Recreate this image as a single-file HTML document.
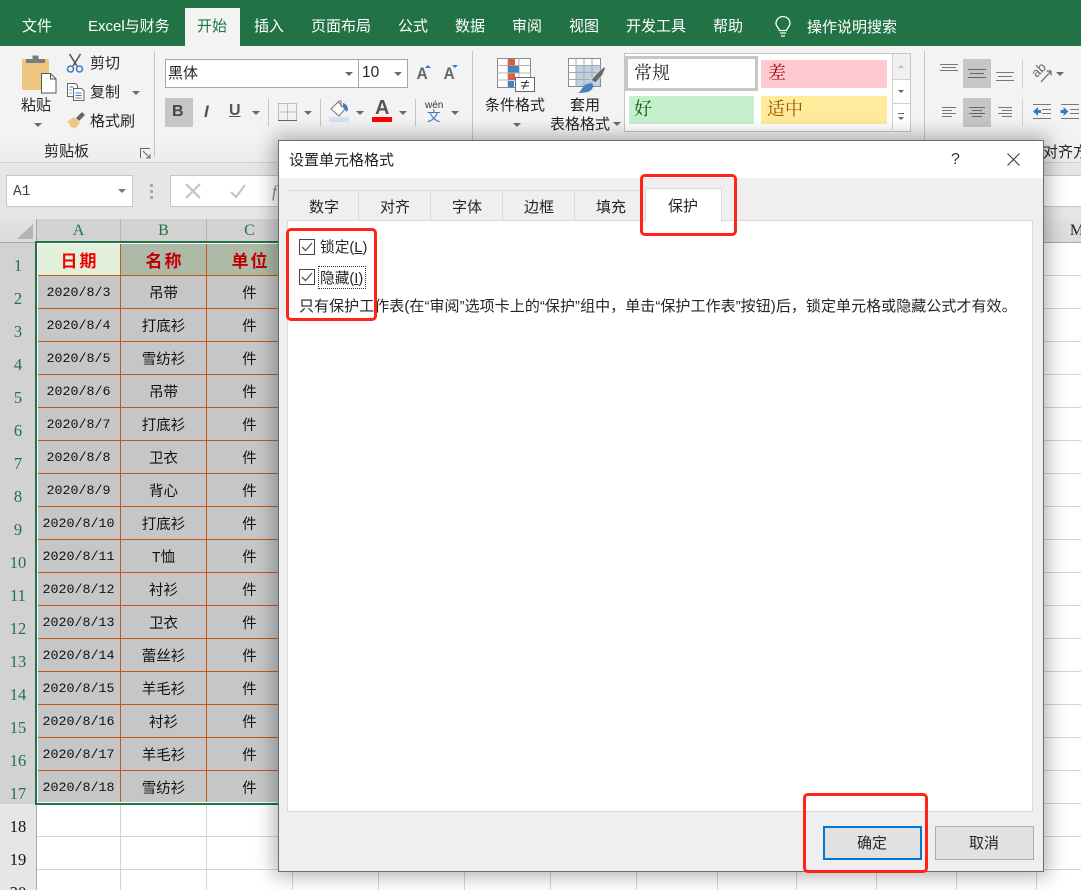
<!DOCTYPE html>
<html lang="zh"><head><meta charset="utf-8"><title>Excel</title>
<style>
html,body{margin:0;padding:0}
#p{position:relative;width:1081px;height:890px;overflow:hidden;background:#fff;font-family:"Liberation Sans","Noto Sans CJK SC",sans-serif;color:#262626}
#p div,#p svg,#p span.t{position:absolute}
.t{white-space:nowrap;line-height:22px;font-size:15px;height:20px}
.w{color:#fff}
.bg{background:#f3f3f3}
.tri{width:0;height:0;border-left:4px solid transparent;border-right:4px solid transparent;border-top:4px solid #6a6a6a}
.sep{width:1px;background:#c6c6c6}
.s{font-family:"Liberation Serif","Noto Serif CJK SC",serif;font-size:18px}
.hn{font-family:"Liberation Serif",serif;font-size:16.5px;width:36px;text-align:center;left:0;color:#217346;line-height:22px;height:20px}
.hb{color:#111}
.ch{font-family:"Liberation Serif",serif;font-size:16px;color:#217346;top:220px;height:22px;line-height:22px;text-align:center}
table{position:absolute;left:36px;top:243px;border-collapse:collapse;table-layout:fixed;width:257px}
td{border:1px solid #c65911;background:#c6c6c6;height:31px;padding:1px 0 0;text-align:center;font:14.5px "Liberation Mono","WenQuanYi Zen Hei",monospace;color:#111;white-space:nowrap;overflow:hidden}
td:first-child{font-size:13.33px;height:30px;padding-top:2px}
tr.h td{height:31px;padding:0 0 0 2px;background:#aeb9a8;color:#c00000;font:bold 17px "WenQuanYi Zen Hei","Noto Sans CJK SC",sans-serif;letter-spacing:2px}
tr.h td.a{background:#e2efda;color:#f00000}
.gl{background:#d4d4d4}
.tab{top:197px;height:20px;line-height:22px;font-size:15px;white-space:nowrap}
.red{border:3.5px solid #ff2318;border-radius:5px;box-sizing:border-box}
.cb{width:14px;height:14px;border:1px solid #444;background:#fff}
</style></head><body><div id="p">

<!-- title / tab bar -->
<div style="left:0;top:0;width:1081px;height:46px;background:#217346"></div>
<div style="left:185px;top:8px;width:55px;height:38px;background:#f3f3f3"></div>
<span class="t w" style="left:22px;top:16px">文件</span>
<span class="t w" style="left:88px;top:16px">Excel与财务</span>
<span class="t" style="left:197px;top:16px;color:#217346">开始</span>
<span class="t w" style="left:254px;top:16px">插入</span>
<span class="t w" style="left:311px;top:16px">页面布局</span>
<span class="t w" style="left:398px;top:16px">公式</span>
<span class="t w" style="left:455px;top:16px">数据</span>
<span class="t w" style="left:512px;top:16px">审阅</span>
<span class="t w" style="left:569px;top:16px">视图</span>
<span class="t w" style="left:626px;top:16px">开发工具</span>
<span class="t w" style="left:713px;top:16px">帮助</span>
<svg style="left:774px;top:16px" width="18" height="22" viewBox="0 0 18 22" fill="none" stroke="#fff" stroke-width="1.3"><path d="M5.5 14.5C5 12 2 10.500 2 7.500A7 7 0 0 1 16 7.500C16 10.500 13 12 12.500 14.500Z"/><path d="M6 17h6M7 20h4"/></svg>
<span class="t w" style="left:807px;top:17px">操作说明搜索</span>

<!-- ribbon -->
<div class="bg" style="left:0;top:46px;width:1081px;height:117px"></div>
<div style="left:0;top:140px;width:1081px;height:23px;background:linear-gradient(#f3f3f3,#ececec)"></div>
<div style="left:0;top:162px;width:1081px;height:1px;background:#d0d0d0"></div>
<div class="sep" style="left:154px;top:51px;height:106px"></div>
<div class="sep" style="left:472px;top:51px;height:106px"></div>
<div class="sep" style="left:924px;top:51px;height:106px"></div>

<!-- clipboard -->
<svg style="left:21px;top:54px" width="36" height="40" viewBox="0 0 36 40">
<rect x="1" y="5" width="27" height="31" rx="1.500" fill="#efc67f"/>
<path d="M5 5h19v4H5zM11.500 1.500h6v3.500h-6z" fill="#7b7b7b"/>
<path d="M20.500 19.500h9l5.500 5.500V39H20.500z" fill="#fff" stroke="#555"/><path d="M29.500 19.500v5.500H35" fill="none" stroke="#555"/>
</svg>
<span class="t" style="left:21px;top:95px">粘贴</span>
<div class="tri" style="left:34px;top:123px"></div>
<svg style="left:66px;top:53px" width="18" height="20" viewBox="0 0 18 20" fill="none"><path d="M3.500 1L11 13M14.500 1L7 13" stroke="#555" stroke-width="1.600"/><circle cx="4.500" cy="16" r="3" stroke="#3a7ac0" stroke-width="1.500"/><circle cx="13.500" cy="16" r="3" stroke="#3a7ac0" stroke-width="1.500"/></svg>
<span class="t" style="left:90px;top:53px">剪切</span>
<svg style="left:67px;top:83px" width="18" height="18" viewBox="0 0 18 18" fill="#fff" stroke="#666"><path d="M.5.500h8l2 2v11H.5z"/><path d="M6.500 5.500h8l2.500 2.500v9.500H6.500z"/><path d="M2.500 4h4M2.500 7h2M2.500 10h2" stroke="#3a7ac0"/><path d="M8.500 10h6M8.500 12.500h6M8.500 15h6" stroke="#3a7ac0"/></svg>
<span class="t" style="left:90px;top:82px">复制</span>
<div class="tri" style="left:132px;top:91px"></div>
<svg style="left:67px;top:112px" width="18" height="18" viewBox="0 0 18 18"><path d="M0 10L7 5l6 6-5 6-2-2-1 1-1.500-2.500L2 14.500 3 12z" fill="#efc67f"/><path d="M9 6l6-6 3 3-6 6z" fill="#666"/></svg>
<span class="t" style="left:90px;top:111px">格式刷</span>
<span class="t" style="left:44px;top:141px">剪贴板</span>
<svg style="left:140px;top:148px" width="11" height="11" viewBox="0 0 11 11" fill="none" stroke="#666"><path d="M.5 10V.5H10M3 3l7 7M10 6v4H6"/></svg>

<!-- font -->
<div style="left:165px;top:59px;width:192px;height:27px;background:#fff;border:1px solid #a6a6a6"></div>
<div style="left:358px;top:59px;width:48px;height:27px;background:#fff;border:1px solid #a6a6a6"></div>
<span class="t" style="left:168px;top:62px;font-family:'WenQuanYi Zen Hei','Noto Sans CJK SC',sans-serif;font-size:15px">黑体</span>
<span class="t" style="left:362px;top:62px;font-size:15.500px">10</span>
<div class="tri" style="left:345px;top:72px"></div>
<div class="tri" style="left:394px;top:72px"></div>
<span class="t" style="left:416px;top:63px;font-size:17px;color:#666;font-weight:bold;transform:scaleX(.9)">A</span>
<div style="left:425px;top:65px;width:0;height:0;border-left:3px solid transparent;border-right:3px solid transparent;border-bottom:3px solid #3a7ac0"></div>
<span class="t" style="left:443px;top:63px;font-size:17px;color:#666;font-weight:bold;transform:scaleX(.9)">A</span>
<div style="left:452px;top:65px;width:0;height:0;border-left:3px solid transparent;border-right:3px solid transparent;border-top:3px solid #3a7ac0"></div>

<div style="left:165px;top:98px;width:28px;height:29px;background:#c6c6c6"></div>
<span class="t" style="left:172px;top:101px;font-size:16px;font-weight:bold;color:#444">B</span>
<span class="t" style="left:204px;top:101px;font:italic bold 17px/22px 'Liberation Sans',sans-serif;color:#555">I</span>
<span class="t" style="left:229px;top:100px;font-size:16px;font-weight:bold;color:#555;text-decoration:underline">U</span>
<div class="tri" style="left:252px;top:111px"></div>
<div class="sep" style="left:268px;top:99px;height:27px"></div>
<svg style="left:278px;top:103px" width="19" height="18" viewBox="0 0 19 18" fill="none" stroke="#888" shape-rendering="crispEdges"><path d="M.5.500h18M.5 9h18M.5.500v17M9.500 .5v17M18.500.5v17" stroke-dasharray="1 1"/><path d="M0 17.500h19" stroke="#666"/></svg>
<div class="tri" style="left:304px;top:111px"></div>
<div class="sep" style="left:320px;top:99px;height:27px"></div>
<svg style="left:329px;top:100px" width="21" height="23" viewBox="0 0 21 23"><path d="M2 9l7-7 7 7-6 7z" fill="#fff" stroke="#777"/><path d="M9 2l1-1h2v6" fill="none" stroke="#777"/><path d="M14 3c3 1 5 3 5 7l-2 2-1-3-2-3z" fill="#3a7ac0"/><rect y="17" width="20" height="5" fill="#d6e1f2"/></svg>
<div class="tri" style="left:356px;top:111px"></div>
<span class="t" style="left:375px;top:97px;font-size:20px;font-weight:bold;color:#555">A</span>
<div style="left:372px;top:117px;width:20px;height:5px;background:#f00"></div>
<div class="tri" style="left:399px;top:111px"></div>
<div class="sep" style="left:415px;top:99px;height:27px"></div>
<span class="t" style="left:425px;top:95px;font-size:10px;color:#333">wén</span>
<span class="t" style="left:427px;top:106px;font-size:13.500px;color:#3a7ac0">文</span>
<div class="tri" style="left:451px;top:111px"></div>

<!-- conditional format -->
<svg style="left:497px;top:58px" width="40" height="36" viewBox="0 0 40 36">
<rect x=".5" y=".5" width="33" height="29" fill="#fff" stroke="#8a8a8a"/>
<path d="M11 .5v29M22 .5v29M.5 7.500h33M.5 15h33M.5 22h33" stroke="#b5b5b5" fill="none"/>
<rect x="11" y="1" width="7" height="6.500" fill="#d9603d"/><rect x="11" y="8" width="11" height="6.500" fill="#4a80bd"/><rect x="11" y="15.500" width="7" height="6.500" fill="#d9603d"/><rect x="11" y="23" width="6" height="6.500" fill="#4a80bd"/>
<rect x="18.500" y="19.500" width="19" height="14" fill="#fff" stroke="#666"/><path d="M24 24.500h8M24 28h8M30 22l-4 9" stroke="#333" fill="none"/>
</svg>
<span class="t" style="left:485px;top:95px">条件格式</span>
<div class="tri" style="left:513px;top:123px"></div>
<!-- table format -->
<svg style="left:568px;top:58px" width="38" height="36" viewBox="0 0 38 36">
<rect x=".5" y=".5" width="32" height="28" fill="#fff" stroke="#8a8a8a"/>
<rect x="8" y="8" width="24" height="20" fill="#bfd0e6"/>
<path d="M8 .5v28M16 .5v28M24 .5v28M.5 7.500h32M.5 14.500h32M.5 21.500h32" stroke="#a8a8a8" fill="none"/>
<path d="M23 22L30 14l6-5 1.500 1-3 7-7 8z" fill="#6a6a6a" stroke="#f3f3f3" stroke-width=".6"/>
<path d="M10 35c3-1 4-7 9-9 4-2 7 0 6 3-1 4-5 6-15 6z" fill="#4a80bd"/>
</svg>
<span class="t" style="left:570px;top:95px">套用</span>
<span class="t" style="left:550px;top:114px">表格格式</span>
<div class="tri" style="left:613px;top:122px"></div>

<!-- gallery -->
<div style="left:624px;top:53px;width:285px;height:77px;background:#fff;border:1px solid #c6c6c6"></div>
<div style="left:625px;top:56px;width:127px;height:29px;border:3px solid #c6c6c6;background:#fff"></div>
<span class="t s" style="left:634px;top:62px;color:#222">常规</span>
<div style="left:761px;top:60px;width:126px;height:28px;background:#ffc7ce"></div>
<span class="t s" style="left:768px;top:62px;color:#9c0006">差</span>
<div style="left:629px;top:96px;width:125px;height:28px;background:#c6efce"></div>
<span class="t s" style="left:634px;top:98px;color:#006100">好</span>
<div style="left:761px;top:96px;width:126px;height:28px;background:#ffeb9c"></div>
<span class="t s" style="left:767px;top:98px;color:#9c5700">适中</span>
<div style="left:892px;top:54px;width:1px;height:76px;background:#d0d0d0"></div>
<div style="left:893px;top:54px;width:17px;height:25px;background:#f0f0f0"></div>
<div style="left:892px;top:79px;width:18px;height:1px;background:#d0d0d0"></div>
<div style="left:892px;top:103px;width:18px;height:1px;background:#d0d0d0"></div>
<div style="left:898px;top:65px;width:0;height:0;border-left:3px solid transparent;border-right:3px solid transparent;border-bottom:3px solid #c0c0c0"></div>
<div style="left:898px;top:90px;width:0;height:0;border-left:3px solid transparent;border-right:3px solid transparent;border-top:3px solid #666"></div>
<div style="left:898px;top:113px;width:6px;height:1px;background:#666"></div>
<div style="left:898px;top:117px;width:0;height:0;border-left:3px solid transparent;border-right:3px solid transparent;border-top:3px solid #666"></div>

<!-- align -->
<div style="left:963px;top:59px;width:28px;height:29px;background:#c6c6c6"></div>
<div style="left:963px;top:98px;width:28px;height:29px;background:#c6c6c6"></div>
<svg style="left:930px;top:50px" width="151" height="90" viewBox="0 0 151 90" fill="none" stroke="#777" shape-rendering="crispEdges">
<path d="M10 14.500h18M12 17.500h14M10 20.500h18"/>
<path d="M38 19.500h18M40 23.500h14M38 27.500h18" stroke="#666"/>
<path d="M66 22.500h18M68 26.500h14M66 30.500h18"/>
<path d="M12 57.500h14M12 60.500h10M12 63.500h14M12 66.500h10"/>
<path d="M39 57.500h16M42 60.500h10M39 63.500h16M42 66.500h10" stroke="#666"/>
<path d="M68 57.500h14M72 60.500h10M68 63.500h14M72 66.500h10"/>
<path d="M103 54.500h18M112 59.500h9M112 63.500h9M103 68.500h18"/>
<path d="M131 54.500h18M140 59.500h9M140 63.500h9M131 68.500h18"/>
<path d="M103 61.500l5-4.500v3h3v3h-3v3z" fill="#3a7ac0" stroke="none" shape-rendering="auto"/>
<path d="M138.500 61.500l-5-4.500v3h-3v3h3v3z" fill="#3a7ac0" stroke="none" shape-rendering="auto"/>
</svg>
<div class="sep" style="left:1022px;top:60px;height:29px;background:#d0d0d0"></div>
<div class="sep" style="left:1022px;top:99px;height:27px;background:#d0d0d0"></div>
<svg style="left:1032px;top:63px" width="22" height="21" viewBox="0 0 22 21" fill="none" stroke="#666"><path d="M9 19L19 8M19 8h-4.500M19 8v4.500" stroke-width="1.200"/><text x="0" y="12" font-family="Liberation Sans" font-size="13" fill="#666" stroke="none" transform="rotate(-45 6 8)">ab</text></svg>
<div class="tri" style="left:1056px;top:72px"></div>
<span class="t" style="left:1043px;top:142px">对齐方</span>

<!-- formula bar -->
<div style="left:0;top:163px;width:1081px;height:56px;background:#e6e6e6"></div>
<div style="left:6px;top:175px;width:125px;height:30px;background:#fff;border:1px solid #c6c6c6"></div>
<span class="t" style="left:13px;top:181px;font:14.500px/22px 'Liberation Mono',monospace;color:#444">A1</span>
<div class="tri" style="left:118px;top:189px;border-top-color:#777"></div>
<div style="left:149.500px;top:184px;width:3px;height:3px;background:#a8a8a8"></div>
<div style="left:149.500px;top:190px;width:3px;height:3px;background:#a8a8a8"></div>
<div style="left:149.500px;top:196px;width:3px;height:3px;background:#a8a8a8"></div>
<div style="left:170px;top:175px;width:911px;height:30px;background:#fff;border:1px solid #c6c6c6;border-right:0"></div>
<svg style="left:185px;top:183px" width="62" height="16" viewBox="0 0 62 16" fill="none" stroke="#c4c4c4" stroke-width="2.200"><path d="M1 1l14 14M15 1L1 15"/><path d="M46 9l5 5 9-12"/></svg>
<span class="t" style="left:272px;top:181px;font:italic 17px/22px 'Liberation Serif',serif;color:#888">f</span>

<!-- sheet headers -->
<div style="left:0;top:219px;width:1081px;height:23px;background:linear-gradient(#e2e2e2,#dcdcdc)"></div>
<div style="left:37px;top:219px;width:256px;height:23px;background:#d2d2d2"></div>
<div style="left:0;top:242px;width:1081px;height:1px;background:#a8a8a8"></div>
<div style="left:0;top:243px;width:36px;height:647px;background:#e6e6e6"></div>
<div style="left:0;top:243px;width:36px;height:561px;background:#d2d2d2"></div>
<div style="left:36px;top:219px;width:1px;height:671px;background:#a8a8a8"></div>
<div style="left:17px;top:224px;width:0;height:0;border-bottom:15px solid #b4b4b4;border-left:16px solid transparent"></div>
<div style="left:120px;top:219px;width:1px;height:23px;background:#b4b4b4"></div>
<div style="left:206px;top:219px;width:1px;height:23px;background:#b4b4b4"></div>
<div class="ch" style="left:37px;width:83px">A</div>
<div class="ch" style="left:121px;width:85px">B</div>
<div class="ch" style="left:207px;width:85px">C</div>
<div class="ch" style="left:1061px;width:32px;color:#222">M</div>

<!-- gridlines -->
<div class="gl" style="left:1044px;top:275px;width:37px;height:1px"></div>
<div class="gl" style="left:1044px;top:308px;width:37px;height:1px"></div>
<div class="gl" style="left:1044px;top:341px;width:37px;height:1px"></div>
<div class="gl" style="left:1044px;top:374px;width:37px;height:1px"></div>
<div class="gl" style="left:1044px;top:407px;width:37px;height:1px"></div>
<div class="gl" style="left:1044px;top:440px;width:37px;height:1px"></div>
<div class="gl" style="left:1044px;top:473px;width:37px;height:1px"></div>
<div class="gl" style="left:1044px;top:506px;width:37px;height:1px"></div>
<div class="gl" style="left:1044px;top:539px;width:37px;height:1px"></div>
<div class="gl" style="left:1044px;top:572px;width:37px;height:1px"></div>
<div class="gl" style="left:1044px;top:605px;width:37px;height:1px"></div>
<div class="gl" style="left:1044px;top:638px;width:37px;height:1px"></div>
<div class="gl" style="left:1044px;top:671px;width:37px;height:1px"></div>
<div class="gl" style="left:1044px;top:704px;width:37px;height:1px"></div>
<div class="gl" style="left:1044px;top:737px;width:37px;height:1px"></div>
<div class="gl" style="left:1044px;top:770px;width:37px;height:1px"></div>
<div class="gl" style="left:37px;top:836px;width:1044px;height:1px"></div>
<div class="gl" style="left:37px;top:803px;width:1044px;height:1px"></div>
<div class="gl" style="left:37px;top:869px;width:1044px;height:1px"></div>
<div class="gl" style="left:120px;top:804px;width:1px;height:86px"></div>
<div class="gl" style="left:206px;top:804px;width:1px;height:86px"></div>
<div class="gl" style="left:292px;top:804px;width:1px;height:86px"></div>
<div class="gl" style="left:378px;top:804px;width:1px;height:86px"></div>
<div class="gl" style="left:464px;top:804px;width:1px;height:86px"></div>
<div class="gl" style="left:550px;top:804px;width:1px;height:86px"></div>
<div class="gl" style="left:636px;top:804px;width:1px;height:86px"></div>
<div class="gl" style="left:717px;top:804px;width:1px;height:86px"></div>
<div class="gl" style="left:796px;top:804px;width:1px;height:86px"></div>
<div class="gl" style="left:876px;top:804px;width:1px;height:86px"></div>
<div class="gl" style="left:956px;top:804px;width:1px;height:86px"></div>
<div class="gl" style="left:1036px;top:804px;width:1px;height:86px"></div>

<!-- row numbers -->
<div class="hn" style="top:255px">1</div><div class="hn" style="top:288px">2</div><div class="hn" style="top:321px">3</div><div class="hn" style="top:354px">4</div><div class="hn" style="top:387px">5</div><div class="hn" style="top:420px">6</div><div class="hn" style="top:453px">7</div><div class="hn" style="top:486px">8</div><div class="hn" style="top:519px">9</div><div class="hn" style="top:552px">10</div><div class="hn" style="top:585px">11</div><div class="hn" style="top:618px">12</div><div class="hn" style="top:651px">13</div><div class="hn" style="top:684px">14</div><div class="hn" style="top:717px">15</div><div class="hn" style="top:750px">16</div><div class="hn" style="top:783px">17</div>
<div class="hn hb" style="top:816px">18</div><div class="hn hb" style="top:849px">19</div><div class="hn hb" style="top:882px">20</div>

<!-- data -->
<table><colgroup><col style="width:84px"><col style="width:86px"><col style="width:86px"></colgroup>
<tr class="h" style="height:32px"><td class="a" style="height:31px">日期</td><td style="height:31px">名称</td><td style="height:31px">单位</td></tr>
<tr><td>2020/8/3</td><td>吊带</td><td>件</td></tr>
<tr><td>2020/8/4</td><td>打底衫</td><td>件</td></tr>
<tr><td>2020/8/5</td><td>雪纺衫</td><td>件</td></tr>
<tr><td>2020/8/6</td><td>吊带</td><td>件</td></tr>
<tr><td>2020/8/7</td><td>打底衫</td><td>件</td></tr>
<tr><td>2020/8/8</td><td>卫衣</td><td>件</td></tr>
<tr><td>2020/8/9</td><td>背心</td><td>件</td></tr>
<tr><td>2020/8/10</td><td>打底衫</td><td>件</td></tr>
<tr><td>2020/8/11</td><td>T恤</td><td>件</td></tr>
<tr><td>2020/8/12</td><td>衬衫</td><td>件</td></tr>
<tr><td>2020/8/13</td><td>卫衣</td><td>件</td></tr>
<tr><td>2020/8/14</td><td>蕾丝衫</td><td>件</td></tr>
<tr><td>2020/8/15</td><td>羊毛衫</td><td>件</td></tr>
<tr><td>2020/8/16</td><td>衬衫</td><td>件</td></tr>
<tr><td>2020/8/17</td><td>羊毛衫</td><td>件</td></tr>
<tr><td>2020/8/18</td><td>雪纺衫</td><td>件</td></tr>
</table>
<div style="left:35px;top:241px;width:300px;height:560px;border:2px solid #217346;box-shadow:inset 0 0 0 1px #fff"></div>

<!-- dialog -->
<div style="left:278px;top:140px;width:764px;height:730px;background:#efefef;border:1px solid #6e6e6e;box-shadow:0 0 18px 4px rgba(0,0,0,.3)"></div>
<div style="left:279px;top:141px;width:764px;height:37px;background:#fff"></div>
<span class="t" style="left:289px;top:150px;font-size:15px;color:#222">设置单元格格式</span>
<span class="t" style="left:951px;top:149px;font-size:16px;color:#333">?</span>
<svg style="left:1007px;top:153px" width="13" height="13" viewBox="0 0 13 13" stroke="#333" fill="none"><path d="M.5.500l12 12M12.500.5l-12 12"/></svg>

<div style="left:289px;top:190px;width:356px;height:1px;background:#d9d9d9"></div>
<div style="left:358px;top:190px;width:1px;height:30px;background:#d9d9d9"></div>
<div style="left:430px;top:190px;width:1px;height:30px;background:#d9d9d9"></div>
<div style="left:502px;top:190px;width:1px;height:30px;background:#d9d9d9"></div>
<div style="left:574px;top:190px;width:1px;height:30px;background:#d9d9d9"></div>
<div class="tab" style="left:309px">数字</div>
<div class="tab" style="left:380px">对齐</div>
<div class="tab" style="left:452px">字体</div>
<div class="tab" style="left:524px">边框</div>
<div class="tab" style="left:596px">填充</div>

<div style="left:287px;top:220px;width:744px;height:590px;background:#fff;border:1px solid #d9d9d9"></div>
<div style="left:645px;top:188px;width:75px;height:33px;background:#fff;border:1px solid #d9d9d9;border-bottom:0"></div>
<div class="tab" style="left:668px;top:196px">保护</div>

<div class="cb" style="left:299px;top:239px"></div>
<svg style="left:301px;top:242px" width="12" height="10" viewBox="0 0 12 10" fill="none" stroke="#555" stroke-width="1.300"><path d="M1 5l3.500 3.500L11 1"/></svg>
<span class="t" style="left:320px;top:237px;font-size:14.700px">锁定(<span style="text-decoration:underline">L</span>)</span>
<div class="cb" style="left:299px;top:269px"></div>
<svg style="left:301px;top:272px" width="12" height="10" viewBox="0 0 12 10" fill="none" stroke="#555" stroke-width="1.300"><path d="M1 5l3.500 3.500L11 1"/></svg>
<div style="left:318px;top:266px;width:46px;height:21px;border:1px dotted #333"></div>
<span class="t" style="left:320px;top:268px;font-size:14.700px">隐藏(<span style="text-decoration:underline">I</span>)</span>
<span class="t" style="left:299px;top:296px;font-size:15px;letter-spacing:.05px">只有保护工作表(在“审阅”选项卡上的“保护”组中，单击“保护工作表”按钮)后，锁定单元格或隐藏公式才有效。</span>

<div style="left:823px;top:826px;width:95px;height:30px;background:#e1e1e1;border:2px solid #0078d7"></div>
<span class="t" style="left:857px;top:833px;font-size:15px">确定</span>
<div style="left:935px;top:826px;width:97px;height:32px;background:#e1e1e1;border:1px solid #adadad"></div>
<span class="t" style="left:969px;top:833px;font-size:15px">取消</span>

<!-- red annotations -->
<div class="red" style="left:640px;top:174px;width:97px;height:62px"></div>
<div class="red" style="left:286px;top:228px;width:91px;height:93px"></div>
<div class="red" style="left:803px;top:793px;width:125px;height:80px"></div>

</div></body></html>
